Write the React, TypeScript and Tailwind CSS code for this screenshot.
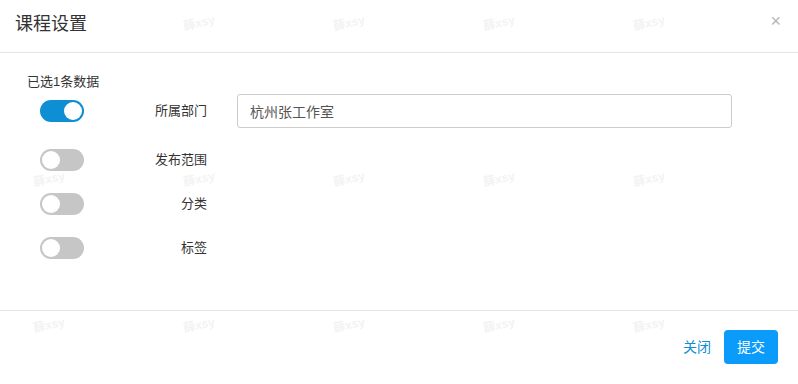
import React, { useState } from 'react';

const fields = [
  { key: 'dept', label: '所属部门' },
  { key: 'scope', label: '发布范围' },
  { key: 'category', label: '分类' },
  { key: 'tags', label: '标签' },
];

function Toggle({ on, onClick }: { on: boolean; onClick: () => void }) {
  return (
    <button
      onClick={onClick}
      className={`relative block w-[44px] h-[22px] rounded-full shrink-0 ${on ? 'bg-[#0e8ed3]' : 'bg-[#c6c6c6]'}`}
    >
      <span
        className={`absolute top-[2px] w-[18px] h-[18px] rounded-full bg-white ${on ? 'left-[24px]' : 'left-[2px]'}`}
      />
    </button>
  );
}

// faint watermark grid laid over the dialog
const marks: { x: number; y: number }[] = [];
for (const y of [14, 170, 316]) {
  for (const x of [33, 183, 333, 483, 633]) {
    if (y === 14 && x === 33) continue;
    marks.push({ x, y });
  }
}

export default function App() {
  const [enabled, setEnabled] = useState<Record<string, boolean>>({ dept: true });

  return (
    <div
      className="relative w-[798px] h-[384px] bg-white overflow-hidden text-[#333]"
      style={{ fontFamily: '"Liberation Sans", "Noto Sans CJK SC", sans-serif' }}
    >
      {/* Header */}
      <div className="h-[53px] border-b border-[#e5e5e5] flex items-center justify-between pl-[15px] pr-[17px] pb-[4px]">
        <h2 className="text-[18px] leading-none text-[#333]">课程设置</h2>
        <button className="text-[#b5b5b5] text-[18px] leading-none -mt-[6px]">×</button>
      </div>

      {/* Body */}
      <div className="h-[257px] pt-[22px] pl-[27px] pr-[66px]">
        <div className="text-[13px] leading-[14px] mb-[5px]">已选1条数据</div>
        <div className="flex flex-col">
          {fields.map((f, i) => (
            <div
              key={f.key}
              className={`flex items-center h-[34px] ${i === 1 ? 'mt-[15px]' : i > 1 ? 'mt-[10px]' : ''}`}
            >
              <div className="flex pl-[13px]">
                <Toggle
                  on={!!enabled[f.key]}
                  onClick={() => setEnabled({ ...enabled, [f.key]: !enabled[f.key] })}
                />
              </div>
              <label className="w-[123px] text-right text-[13px] shrink-0">{f.label}</label>
              {f.key === 'dept' && enabled.dept && (
                <input
                  defaultValue="杭州张工作室"
                  className="ml-[30px] flex-1 h-[34px] px-[12px] border border-[#ccc] rounded-[3px] text-[14px] text-[#555] outline-none"
                />
              )}
            </div>
          ))}
        </div>
      </div>

      {/* Footer */}
      <div className="border-t border-[#e5e5e5] h-[74px] flex items-start justify-end gap-[13px] pt-[19px] pr-[20px]">
        <button className="h-[34px] text-[14px] text-[#0e8ed3]">关闭</button>
        <button className="h-[34px] w-[54px] rounded-[4px] bg-[#0a9bfb] text-white text-[14px]">提交</button>
      </div>

      {/* Watermarks */}
      <div className="absolute inset-0 pointer-events-none">
        {marks.map((m, i) => (
          <span
            key={i}
            className="absolute text-[12px] font-bold text-[#f3f3f3] -rotate-12"
            style={{ left: m.x, top: m.y }}
          >
            薛xsy
          </span>
        ))}
      </div>
    </div>
  );
}
